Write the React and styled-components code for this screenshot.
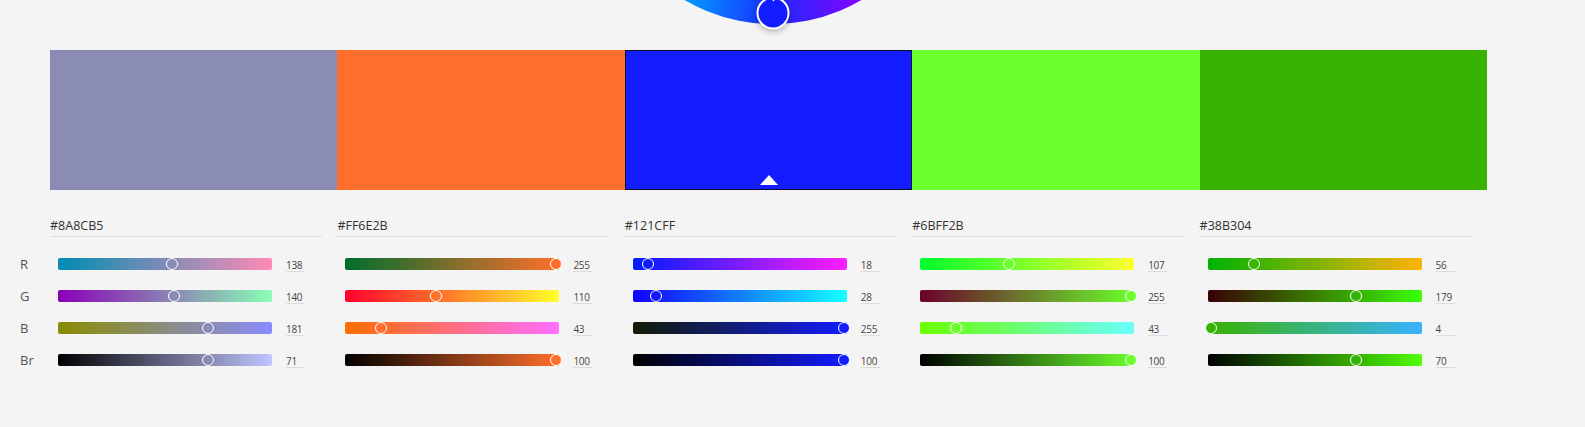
import styled, { createGlobalStyle } from 'styled-components';

const GlobalStyle = createGlobalStyle`
  html, body {
    margin: 0;
    padding: 0;
    background: #f4f4f4;
    font-family: "Open Sans", "Noto Sans", sans-serif;
    color: #333;
  }
`;

const SWATCHES = ['#8A8CB5', '#FF6E2B', '#121CFF', '#6BFF2B', '#38B304'];
const SELECTED = 2;
const BAR_WIDTH = 214;

const toRgb = (hex) => [1, 3, 5].map(i => parseInt(hex.slice(i, i + 2), 16));

const channelsOf = (hex) => {
  const [r, g, b] = toRgb(hex);
  const max = Math.max(r, g, b) || 1;
  const k = 255 / max;
  const lit = [r, g, b].map(c => Math.round(c * k));
  return [
    { key: 'R', value: r, pos: r / 255, from: `rgb(0,${g},${b})`, to: `rgb(255,${g},${b})` },
    { key: 'G', value: g, pos: g / 255, from: `rgb(${r},0,${b})`, to: `rgb(${r},255,${b})` },
    { key: 'B', value: b, pos: b / 255, from: `rgb(${r},${g},0)`, to: `rgb(${r},${g},255)` },
    { key: 'Br', value: Math.round(max / 255 * 100), pos: max / 255, from: '#000', to: `rgb(${lit.join(',')})` }
  ];
};

const Page = styled.div`
  width: 1585px;
  height: 427px;
  overflow: hidden;
`;

const WheelArea = styled.div`
  display: flex;
  align-items: flex-start;
  height: 50px;
`;

const Wheel = styled.div`
  position: relative;
  flex-shrink: 0;
  width: 350px;
  height: 350px;
  margin: -326px 0 0 598px;
  border-radius: 50%;
  background: conic-gradient(
    #ffd000 0deg,
    #ff7a00 40deg,
    #ff0040 80deg,
    #e000e0 115deg,
    #8a00ff 148deg,
    #1a2cff 180deg,
    #00a0ff 212deg,
    #00e0c0 260deg,
    #30e000 310deg,
    #ffd000 360deg
  );
`;

const Handle = styled.div`
  position: absolute;
  left: 175px;
  top: 339px;
  width: 29px;
  height: 29px;
  transform: translate(-50%, -50%);
  border-radius: 50%;
  border: 2.5px solid #fff;
  background: ${p => p.$color};
  box-shadow: 0 2px 6px rgba(0, 0, 0, 0.3);

  &::after {
    content: '';
    position: absolute;
    left: 50%;
    top: -1px;
    transform: translateX(-50%);
    border-left: 3px solid transparent;
    border-right: 3px solid transparent;
    border-top: 4px solid #fff;
  }
`;

const SwatchRow = styled.div`
  display: flex;
  width: 1437px;
  height: 140px;
  margin-left: 50px;
`;

const Swatch = styled.div`
  position: relative;
  flex: 1;
  background: ${p => p.$color};
  box-shadow: ${p => (p.$selected ? 'inset 0 0 0 1px #0c0c2e' : 'none')};
`;

const Marker = styled.div`
  position: absolute;
  left: 50%;
  bottom: 5px;
  transform: translateX(-50%);
  border-left: 9px solid transparent;
  border-right: 9px solid transparent;
  border-bottom: 10px solid #fff;
`;

const Controls = styled.div`
  display: grid;
  grid-template-columns: 30px repeat(5, 1fr);
  width: 1467px;
  margin: 26px 0 0 20px;
`;

const LabelColumn = styled.div`
  display: flex;
  flex-direction: column;
`;

const HeaderSpacer = styled.div`
  height: 21px;
  margin-bottom: 11px;
`;

const ChannelLabel = styled.div`
  height: 32px;
  display: flex;
  align-items: center;
  font-size: 13px;
  color: #555;
`;

const Column = styled.div`
  display: flex;
  flex-direction: column;
`;

const HexField = styled.div`
  width: 272px;
  height: 20px;
  line-height: 20px;
  font-size: 12.5px;
  color: #333;
  border-bottom: 1px solid #dcdcdc;
  margin-bottom: 11px;
`;

const SliderRow = styled.div`
  height: 32px;
  display: flex;
  align-items: center;
  gap: 14px;
  padding-left: 8px;
`;

const Bar = styled.div`
  position: relative;
  width: ${BAR_WIDTH}px;
  height: 12px;
  border-radius: 2px;
  background: linear-gradient(to right, ${p => p.$from}, ${p => p.$to});
`;

const Thumb = styled.div`
  position: absolute;
  top: 50%;
  width: 10px;
  height: 10px;
  transform: translate(-50%, -50%);
  border-radius: 50%;
  border: 1.5px solid #fff;
  background: ${p => p.$color};
`;

const Value = styled.div`
  width: 19px;
  height: 12px;
  margin-top: 2px;
  line-height: 12px;
  font-size: 10px;
  letter-spacing: -0.3px;
  color: #444;
  border-bottom: 1px solid #dcdcdc;
  white-space: nowrap;
`;

const App = () => (
  <Page>
    <GlobalStyle />
    <WheelArea>
      <Wheel>
        <Handle $color={SWATCHES[SELECTED]} />
      </Wheel>
    </WheelArea>

    <SwatchRow>
      {SWATCHES.map((hex, i) => (
        <Swatch key={hex} $color={hex} $selected={i === SELECTED}>
          {i === SELECTED && <Marker />}
        </Swatch>
      ))}
    </SwatchRow>

    <Controls>
      <LabelColumn>
        <HeaderSpacer />
        {['R', 'G', 'B', 'Br'].map(k => <ChannelLabel key={k}>{k}</ChannelLabel>)}
      </LabelColumn>
      {SWATCHES.map(hex => (
        <Column key={hex}>
          <HexField>{hex}</HexField>
          {channelsOf(hex).map(ch => (
            <SliderRow key={ch.key}>
              <Bar $from={ch.from} $to={ch.to}>
                <Thumb $color={hex} style={{ left: `${ch.pos * (BAR_WIDTH - 3)}px` }} />
              </Bar>
              <Value>{ch.value}</Value>
            </SliderRow>
          ))}
        </Column>
      ))}
    </Controls>
  </Page>
);

export default App;
